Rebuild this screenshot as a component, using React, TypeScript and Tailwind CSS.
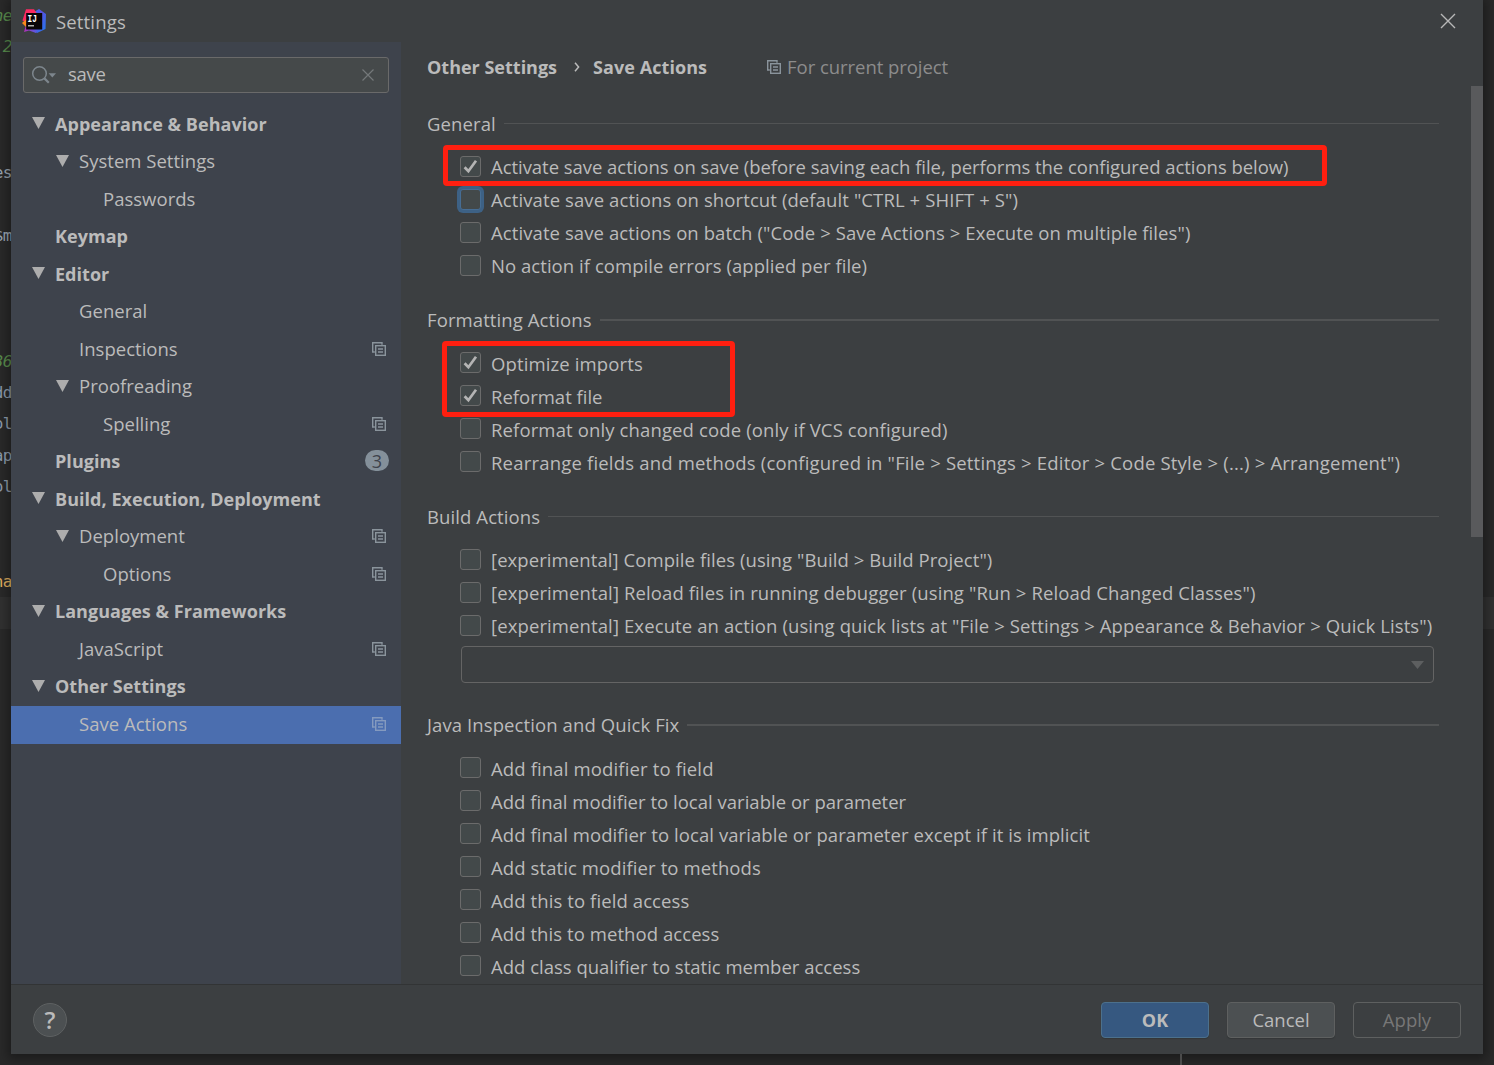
import clsx from "clsx";

type TreeItem = {
  label: string;
  level: 0 | 1 | 2;
  open?: boolean;
  project?: boolean;
  badge?: string;
  selected?: boolean;
};

type Option = {
  label: string;
  checked?: boolean;
  focused?: boolean;
  tracking?: string;
};

const TREE: TreeItem[] = [
  { label: "Appearance & Behavior", level: 0, open: true },
  { label: "System Settings", level: 1, open: true },
  { label: "Passwords", level: 2 },
  { label: "Keymap", level: 0 },
  { label: "Editor", level: 0, open: true },
  { label: "General", level: 1 },
  { label: "Inspections", level: 1, project: true },
  { label: "Proofreading", level: 1, open: true },
  { label: "Spelling", level: 2, project: true },
  { label: "Plugins", level: 0, badge: "3" },
  { label: "Build, Execution, Deployment", level: 0, open: true },
  { label: "Deployment", level: 1, open: true, project: true },
  { label: "Options", level: 2, project: true },
  { label: "Languages & Frameworks", level: 0, open: true },
  { label: "JavaScript", level: 1, project: true },
  { label: "Other Settings", level: 0, open: true },
  { label: "Save Actions", level: 1, project: true, selected: true },
];

const GENERAL: Option[] = [
  { label: "Activate save actions on save (before saving each file, performs the configured actions below)", checked: true, tracking: "tracking-[-0.04px]" },
  { label: 'Activate save actions on shortcut (default "CTRL + SHIFT + S")', focused: true, tracking: "tracking-[0.1px]" },
  { label: 'Activate save actions on batch ("Code > Save Actions > Execute on multiple files")', tracking: "tracking-[0.09px]" },
  { label: "No action if compile errors (applied per file)", tracking: "tracking-[0.05px]" },
];

const FORMATTING: Option[] = [
  { label: "Optimize imports", checked: true, tracking: "tracking-[0.13px]" },
  { label: "Reformat file", checked: true, tracking: "tracking-normal" },
  { label: "Reformat only changed code (only if VCS configured)", tracking: "tracking-[0.13px]" },
  { label: 'Rearrange fields and methods (configured in "File > Settings > Editor > Code Style > (...) > Arrangement")', tracking: "tracking-[0.19px]" },
];

const BUILD: Option[] = [
  { label: '[experimental] Compile files (using "Build > Build Project")', tracking: "tracking-[0.08px]" },
  { label: '[experimental] Reload files in running debugger (using "Run > Reload Changed Classes")', tracking: "tracking-[0.11px]" },
  { label: '[experimental] Execute an action (using quick lists at "File > Settings > Appearance & Behavior > Quick Lists")', tracking: "tracking-[0.11px]" },
];

const JAVA: Option[] = [
  { label: "Add final modifier to field", tracking: "tracking-[0.14px]" },
  { label: "Add final modifier to local variable or parameter", tracking: "tracking-[0.02px]" },
  { label: "Add final modifier to local variable or parameter except if it is implicit" },
  { label: "Add static modifier to methods", tracking: "tracking-[0.1px]" },
  { label: "Add this to field access", tracking: "tracking-[0.1px]" },
  { label: "Add this to method access" },
  { label: "Add class qualifier to static member access", tracking: "tracking-normal" },
];

// visible ends of the editor lines left of the dialog, by line number
const EDITOR_LINES: Record<number, { text: string; color: string }> = {
  0: { text: "ne", color: "text-[#588a4c] italic" },
  1: { text: "2", color: "text-[#588a4c] italic" },
  5: { text: "es", color: "text-[#9aa5b1]" },
  7: { text: "$m", color: "text-[#9aa5b1]" },
  11: { text: "36", color: "text-[#588a4c] italic" },
  12: { text: "dd", color: "text-[#8c9aab]" },
  13: { text: "ol", color: "text-[#8c9aab]" },
  14: { text: "ap", color: "text-[#8c9aab]" },
  15: { text: "ol", color: "text-[#8c9aab]" },
  18: { text: "na", color: "text-[#e0b060]" },
};

const INDENT = { 0: "pl-[21px]", 1: "pl-[45px]", 2: "pl-[69px]" };

function IdeaLogo() {
  return (
    <svg width="24" height="24" viewBox="0 0 24 24">
      <defs>
        <linearGradient id="idea-blue" x1="0" y1="0" x2="1" y2="1">
          <stop offset="0" stopColor="#2f7df2" />
          <stop offset="0.4" stopColor="#5a4fe0" />
          <stop offset="1" stopColor="#1f7cf0" />
        </linearGradient>
        <linearGradient id="idea-purple" x1="0" y1="0" x2="1" y2="0">
          <stop offset="0" stopColor="#b32fb4" />
          <stop offset="1" stopColor="#4a60e8" />
        </linearGradient>
      </defs>
      <path d="M12 3L17 0L24 5L23.5 20L15 24L10 20Z" fill="url(#idea-blue)" />
      <path d="M2 23L4 16L16 20L14 24L7 21.5Z" fill="url(#idea-purple)" />
      <path d="M4 0.3H12L15 4.5V10L5 14L0.5 11.5Z" fill="#fb2a62" />
      <path d="M0 14L4.5 10V18.5Z" fill="#f98a1c" />
      <rect x="4.2" y="4" width="16" height="16.5" fill="#0a0508" />
      <text x="5.6" y="13" fontSize="10" fontWeight="700" fontFamily="Liberation Mono, monospace" fill="#fff" textLength="9.4" lengthAdjust="spacingAndGlyphs">IJ</text>
      <rect x="6" y="16.2" width="6" height="1.2" fill="#d8d8d8" />
    </svg>
  );
}

function ProjectIcon({ size = 14, dim }: { size?: number; dim?: boolean }) {
  return (
    <svg width={size} height={size} viewBox="0 0 14 14" fill="none" stroke={dim ? "#849abf" : "#8a949c"} strokeWidth="1.4" className="shrink-0">
      <path d="M2.8 10H0.7V0.7H10V2.8" />
      <rect x="3.7" y="3.7" width="9.6" height="9.6" />
      <path d="M6 7H11M6 10H11" />
    </svg>
  );
}

function Arrow() {
  return (
    <svg width="13" height="12" viewBox="0 0 13 12" className="shrink-0">
      <path d="M0 0H13L6.5 12Z" fill="#adadad" />
    </svg>
  );
}

function SearchField() {
  return (
    <div className="mx-3 flex h-9 items-center rounded-[3px] border border-[#6a6a6a] bg-[#45494a] pl-[7px] pr-3.5">
      <svg width="26" height="20" viewBox="0 0 26 20" fill="none">
        <circle cx="8.5" cy="8.5" r="6.8" stroke="#7d868d" strokeWidth="1.5" />
        <path d="M13.4 13.4L17.8 17.8" stroke="#7d868d" strokeWidth="2.2" />
        <path d="M17.6 8.2H25L21.3 12.4Z" fill="#7d868d" />
      </svg>
      <span className="flex-1 pb-0.5 pl-[11px] tracking-[-0.3px]">save</span>
      <svg width="12" height="12" viewBox="0 0 12 12" stroke="#74787a" strokeWidth="1.2">
        <path d="M0.5 0.5L11.5 11.5M11.5 0.5L0.5 11.5" />
      </svg>
    </div>
  );
}

function TreeRow({ item }: { item: TreeItem }) {
  return (
    <div className={clsx("flex h-[37.5px] items-center pb-0.5 pr-[15px]", INDENT[item.level], item.selected && "bg-[#4b6eaf]")}>
      <span className="flex w-[23px] shrink-0 pb-[1.5px]">{item.open && <Arrow />}</span>
      <span className={clsx("flex-1 whitespace-nowrap", item.level === 0 ? "text-[18px] font-bold tracking-[0.04px]" : "tracking-[0.02px]")}>{item.label}</span>
      {item.project && <ProjectIcon dim={item.selected} />}
      {item.badge && (
        <span className="-mr-[3px] mb-[1.5px] flex h-[21px] w-6 items-center justify-center rounded-full bg-[#84909a] text-[18px] leading-none text-[#3e434c]">{item.badge}</span>
      )}
    </div>
  );
}

function Checkbox({ checked, focused }: { checked?: boolean; focused?: boolean }) {
  return (
    <span
      className={clsx(
        "mb-0.5 flex size-[21px] shrink-0 items-center justify-center rounded-[3px] border-[1.5px] bg-[#43494a]",
        focused ? "border-[#466d94] ring-[3px] ring-[#3d6185]" : "border-[#6b6b6b]",
      )}
    >
      {checked && (
        <svg width="15" height="15" viewBox="0 0 15 15" fill="none" className="-mt-px">
          <path d="M1.6 8.2L5.4 12.2L13 1.8" stroke="#b4b4b4" strokeWidth="2.7" />
        </svg>
      )}
    </span>
  );
}

function Section({
  title,
  height,
  thick,
  options,
  children,
}: {
  title: string;
  height?: string;
  thick?: boolean;
  options: Option[];
  children?: React.ReactNode;
}) {
  return (
    <section className={clsx("relative shrink-0", height)}>
      <div className="flex h-8 items-center gap-2">
        <h2 className="tracking-[0.1px]">{title}</h2>
        <div className={clsx("flex-1 bg-[#515354]", thick ? "h-0.5" : "mb-px h-px")} />
      </div>
      <div className="mt-[11px] pl-[33px]">
        {options.map((option) => (
          <label key={option.label} className="flex h-[33px] items-center gap-[10px] whitespace-nowrap">
            <Checkbox checked={option.checked} focused={option.focused} />
            <span className={clsx(thick && "pt-0.5", option.tracking ?? "tracking-[0.07px]")}>{option.label}</span>
          </label>
        ))}
      </div>
      {children}
    </section>
  );
}

export default function App() {
  return (
    <div className="relative flex h-[1065px] w-[1494px] flex-col overflow-hidden bg-[#292929] pl-[11px] font-['Open_Sans','Noto_Sans',sans-serif] text-[18.5px] leading-none text-[#bbbbbb]">
      <div className="absolute inset-y-0 left-0 w-full font-['DejaVu_Sans_Mono',monospace] text-[16px] tracking-[-0.5px]">
        {Array.from({ length: 34 }, (_, i) => (
          <div key={i} className={clsx("flex h-[31.44px] items-center", i === 19 && "bg-[#313131]")}>
            <span className={clsx("flex w-3 justify-end leading-6", EDITOR_LINES[i]?.color)}>{EDITOR_LINES[i]?.text}</span>
          </div>
        ))}
      </div>

      <div className="relative flex h-[1054px] w-[1472px] flex-col bg-[#3c3f41] shadow-[0_2px_10px_3px_rgba(0,0,0,0.35)]">
        <header className="flex h-[42px] shrink-0 items-center pl-[11px] pr-[27px]">
          <IdeaLogo />
          <h1 className="flex-1 pl-[10px] pt-0.5 tracking-[0.16px]">Settings</h1>
          <svg width="16" height="16" viewBox="0 0 16 16" stroke="#b8b8b8" strokeWidth="1.4">
            <path d="M1 1L15 15M15 1L1 15" />
          </svg>
        </header>

        <div className="flex h-[942px] shrink-0">
          <aside className="w-[390px] shrink-0 bg-[#3e434c] pt-[15px]">
            <SearchField />
            <nav className="mt-[13px]">
              {TREE.map((item, i) => (
                <TreeRow key={i} item={item} />
              ))}
            </nav>
          </aside>

          <main className="flex min-w-0 flex-1 flex-col">
            <div className="flex h-[44px] shrink-0 items-center pl-[26px] pt-[6px]">
              <span className="text-[18px] font-bold">Other Settings</span>
              <svg width="6" height="10" viewBox="0 0 6 10" fill="none" stroke="#bbbbbb" strokeWidth="1.5" className="ml-[17px] mr-[13px]">
                <path d="M1 0.8L4.6 5L1 9.2" />
              </svg>
              <span className="w-[174px] text-[18px] font-bold tracking-[0.06px]">Save Actions</span>
              <ProjectIcon />
              <span className="pl-[6px] tracking-[-0.05px] text-[#8c8c8c]">For current project</span>
            </div>
            <div className="flex min-h-0 flex-1">
              <div className="flex flex-1 flex-col overflow-hidden pl-[26px] pr-8 pt-[22px]">
                <Section title="General" height="h-[196px]" options={GENERAL}>
                  <div className="absolute left-4 top-[37px] h-[41px] w-[884px] rounded-[4px] border-[5px] border-[#ff1f10]" />
                </Section>
                <Section title="Formatting Actions" height="h-[197px]" thick options={FORMATTING}>
                  <div className="absolute left-[15px] top-[37px] h-[76px] w-[293px] rounded-[4px] border-[5px] border-[#ff1f10]" />
                </Section>
                <Section title="Build Actions" height="h-[208px]" options={BUILD}>
                  <div className="ml-[34px] mr-[5px] mt-[3px] flex h-[37px] items-center justify-end rounded-[4px] border-[1.5px] border-[#646464] pr-[9px]">
                    <svg width="13" height="8" viewBox="0 0 13 8">
                      <path d="M0 0H13L6.5 8Z" fill="#5d5f60" />
                    </svg>
                  </div>
                </Section>
                <Section title="Java Inspection and Quick Fix" thick options={JAVA} />
              </div>
              <div className="w-3 shrink-0">
                <div className="h-[451px] bg-[#595a5c]" />
              </div>
            </div>
          </main>
        </div>

        <footer className="flex flex-1 items-center border-t border-[#323435] pl-[22px] pr-[22px]">
          <button className="flex size-[34px] items-center justify-center rounded-full border border-[#5e6162] bg-[#4c5052] text-[24px] font-semibold">?</button>
          <div className="ml-auto flex gap-[18px]">
            <button className="h-9 w-[108px] rounded-[4px] border-[1.5px] border-[#4c708c] bg-[#365880] text-[18px] font-bold shadow-[0_1px_1px_#333638]">OK</button>
            <button className="h-9 w-[108px] rounded-[4px] border-[1.5px] border-[#5e6060] bg-[#4c5052] pt-0.5 shadow-[0_1px_1px_#333638]">Cancel</button>
            <button className="h-9 w-[108px] rounded-[4px] border-[1.5px] border-[#5e6060] pt-0.5 text-[#777777]">Apply</button>
          </div>
        </footer>
      </div>
      <div className="relative ml-[1169px] h-[11px] w-0.5 bg-[#4b4b4b]" />
    </div>
  );
}
